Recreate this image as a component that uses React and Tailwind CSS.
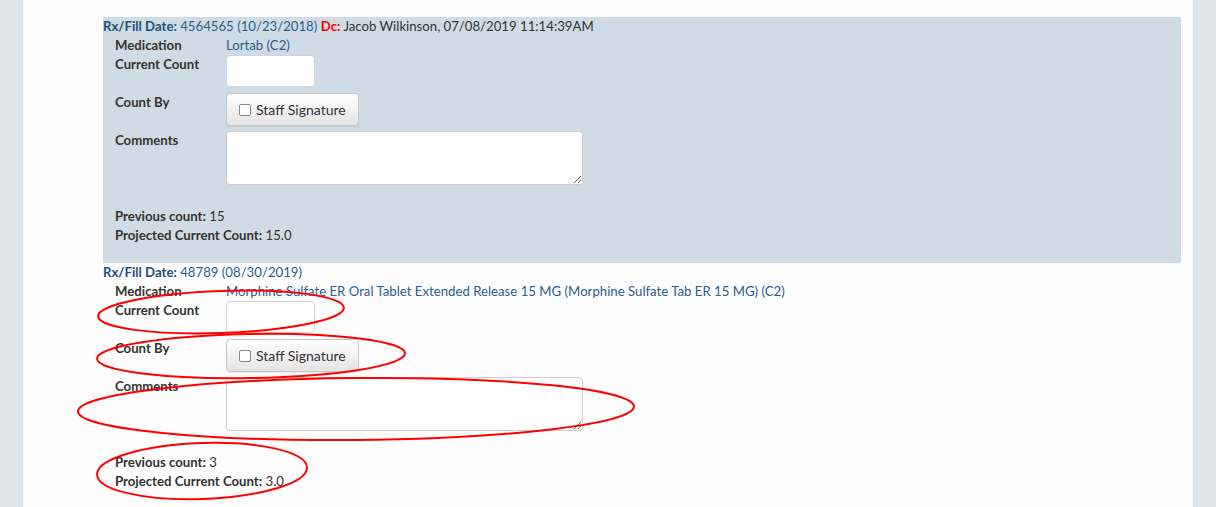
const records = [
  {
    rx: "4564565 (10/23/2018)",
    dc: "Jacob Wilkinson, 07/08/2019 11:14:39AM",
    med: "Lortab (C2)",
    prev: "15",
    proj: "15.0",
    shaded: true,
  },
  {
    rx: "48789 (08/30/2019)",
    med: "Morphine Sulfate ER Oral Tablet Extended Release 15 MG (Morphine Sulfate Tab ER 15 MG) (C2)",
    prev: "3",
    proj: "3.0",
  },
];

function Record({ r }) {
  return (
    <div className={`h-[246px] ${r.shaded ? "bg-[#cfdce5]" : ""}`}>
      <div className="leading-[19px]">
        <span className="font-bold text-[#21507d]">Rx/Fill Date:</span>{" "}
        <span className="text-[#2b5d8c]">{r.rx}</span>
        {r.dc && (
          <>
            {" "}
            <span className="font-bold text-[#ff0000]">Dc:</span>{" "}
            <span className="text-[#333]">{r.dc}</span>
          </>
        )}
      </div>

      <div className="pl-[12px]">
        <div className="flex leading-[19px]">
          <div className="w-[111px] font-bold text-[#333]">Medication</div>
          <div className="text-[#2b5d8c]">{r.med}</div>
        </div>

        <div className="flex">
          <div className="w-[111px] pt-[1px] font-bold text-[#333] leading-[17px]">Current Count</div>
          <input
            type="text"
            className="w-[89px] h-[32px] bg-white border border-[#d4d4d4] rounded-[4px]"
          />
        </div>

        <div className="flex mt-[6px]">
          <div className="w-[111px] pt-[1px] font-bold text-[#333] leading-[17px]">Count By</div>
          <button className="flex items-center gap-[5px] h-[33px] pl-[12px] pr-[12px] rounded-[4px] border border-[#c8c8c8] bg-gradient-to-b from-white to-[#e4e4e4] text-[14px] text-[#333] shadow-[0_1px_1px_rgba(0,0,0,0.08)]">
            <span className="w-[12px] h-[12px] bg-white border border-[#8a8a8a] rounded-[2px]" />
            Staff Signature
          </button>
        </div>

        <div className="flex mt-[5px]">
          <div className="w-[111px] pt-[1px] font-bold text-[#333] leading-[17px]">Comments</div>
          <textarea className="w-[357px] h-[54px] bg-white border border-[#cfcfcf] rounded-[4px] block" />
        </div>

        <div className="mt-[22px] leading-[19px] text-[#333]">
          <div>
            <span className="font-bold">Previous count:</span> {r.prev}
          </div>
          <div>
            <span className="font-bold">Projected Current Count:</span> {r.proj}
          </div>
        </div>
      </div>
    </div>
  );
}

export default function App() {
  return (
    <div className="relative flex min-h-[507px] bg-[#e2e6eb] text-[13.2px] font-['Lato',sans-serif] overflow-hidden">
      <div className="w-[23px] shrink-0" />
      <div className="flex-1 bg-[#fdfdfd] pt-[17px] pl-[80px] pr-[12px]">
        {records.map((r, i) => (
          <Record key={i} r={r} />
        ))}
      </div>
      <div className="w-[23px] shrink-0" />

      {/* red annotation marks */}
      <svg className="absolute inset-0 pointer-events-none" width="1216" height="507">
        <g fill="none" stroke="#f00" strokeWidth="2">
          <ellipse cx="221" cy="312" rx="123" ry="21" transform="rotate(-2 221 312)" />
          <ellipse cx="251" cy="356" rx="154" ry="22" transform="rotate(-1 251 356)" />
          <ellipse cx="356" cy="409" rx="278" ry="31" transform="rotate(-0.5 356 409)" />
          <ellipse cx="202" cy="471" rx="105" ry="28" transform="rotate(-2 202 471)" />
        </g>
      </svg>
    </div>
  );
}
